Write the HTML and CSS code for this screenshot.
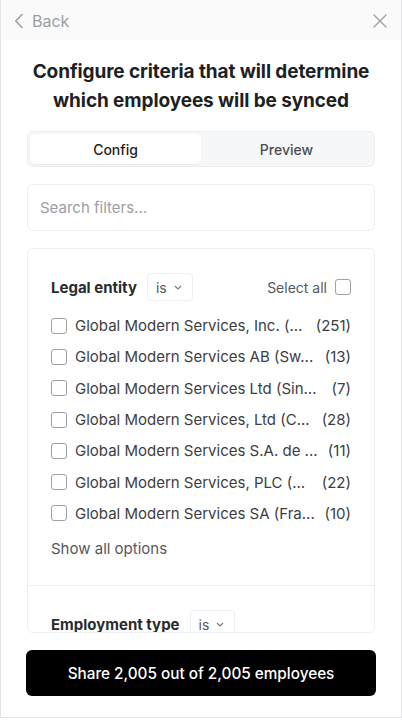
FILE: index.html
```html
<!DOCTYPE html>
<html>
<head>
<meta charset="utf-8">
<link rel="stylesheet" href="styles.css">
</head>
<body>
<div class="frame">
  <header class="topbar">
    <div class="back">
      <svg width="10" height="16" viewBox="0 0 10 16"><path d="M8 1.5 L1.8 8 L8 14.5" fill="none" stroke="#9a9da3" stroke-width="1.6" stroke-linecap="round" stroke-linejoin="round"/></svg>
      <span>Back</span>
    </div>
    <svg class="close" width="16" height="16" viewBox="0 0 16 16"><path d="M2 2 L14 14 M14 2 L2 14" fill="none" stroke="#a3a6ab" stroke-width="1.5" stroke-linecap="round"/></svg>
  </header>
  <h1 class="title">Configure criteria that will determine which employees will be synced</h1>
  <div class="tabs">
    <div class="tab active">Config</div>
    <div class="tab">Preview</div>
  </div>
  <div class="search">Search filters...</div>
  <div class="scroller">
    <section class="filter">
      <div class="filter-head">
        <span class="filter-name">Legal entity</span>
        <span class="op">is <svg width="8" height="5" viewBox="0 0 8 5"><path d="M1 1 L4 4 L7 1" fill="none" stroke="#777" stroke-width="1.1"/></svg></span>
        <span class="select-all">Select all <span class="box"></span></span>
      </div>
      <ul class="options">
        <li><span class="box"></span><span class="label">Global Modern Services, Inc. (...</span><span class="count">(251)</span></li>
        <li><span class="box"></span><span class="label">Global Modern Services AB (Sw...</span><span class="count">(13)</span></li>
        <li><span class="box"></span><span class="label">Global Modern Services Ltd (Sin...</span><span class="count">(7)</span></li>
        <li><span class="box"></span><span class="label">Global Modern Services, Ltd (C...</span><span class="count">(28)</span></li>
        <li><span class="box"></span><span class="label">Global Modern Services S.A. de ...</span><span class="count">(11)</span></li>
        <li><span class="box"></span><span class="label">Global Modern Services, PLC (...</span><span class="count">(22)</span></li>
        <li><span class="box"></span><span class="label">Global Modern Services SA (Fra...</span><span class="count">(10)</span></li>
      </ul>
      <div class="show-all">Show all options</div>
    </section>
    <section class="filter">
      <div class="filter-head">
        <span class="filter-name">Employment type</span>
        <span class="op">is <svg width="8" height="5" viewBox="0 0 8 5"><path d="M1 1 L4 4 L7 1" fill="none" stroke="#777" stroke-width="1.1"/></svg></span>
      </div>
    </section>
  </div>
  <button class="share">Share 2,005 out of 2,005 employees</button>
</div>
</body>
</html>
```
FILE: styles.css
```css
* { box-sizing: border-box; }
html, body { margin: 0; padding: 0; background: #fff; }
body { font-family: Inter, "Noto Sans", sans-serif; color: #222; }
.frame {
  width: 402px;
  height: 718px;
  border: 1px solid #e4e4e6;
  border-top: none;
  display: flex;
  flex-direction: column;
  align-items: stretch;
  overflow: hidden;
}
.topbar {
  height: 40px;
  background: #fafafa;
  display: flex;
  align-items: center;
  justify-content: space-between;
  padding: 0 13px 0 13px;
  flex-shrink: 0;
}
.back { display: flex; align-items: center; gap: 8px; color: #9a9da3; font-size: 16px; margin-top: 1px; }
.close { margin-top: 1px; }
.title {
  margin: 17px 30px 0;
  font-size: 19px;
  line-height: 29px;
  font-weight: 650;
  text-align: center;
  color: #1e1f22;
  letter-spacing: -0.1px;
}
.tabs {
  margin: 16px 26px 0;
  height: 36px;
  background: #f6f7f9;
  border: 1px solid #eceef0;
  border-radius: 6px;
  display: flex;
  padding: 2px;
  flex-shrink: 0;
}
.tab {
  flex: 1;
  display: flex;
  align-items: center;
  justify-content: center;
  font-size: 14px;
  font-weight: 500;
  color: #4b4d52;
  border-radius: 5px;
}
.tab.active { background: #fff; color: #1e1f22; box-shadow: 0 1px 2px rgba(0,0,0,0.06); }
.search {
  margin: 17px 26px 0;
  height: 47px;
  border: 1px solid #eceef0;
  border-radius: 6px;
  padding: 0 12px;
  display: flex;
  align-items: center;
  font-size: 15px;
  color: #9b9ea4;
  flex-shrink: 0;
}
.scroller {
  margin: 17px 26px 0;
  height: 385px;
  border: 1px solid #eceef0;
  border-radius: 6px;
  overflow: hidden;
  flex-shrink: 0;
}
.filter { padding: 24px 23px 0 23px; }
.filter + .filter { border-top: 1px solid #eceef0; }
.filter:first-child { height: 336px; }
.filter-head { display: flex; align-items: center; height: 28px; }
.filter-name { font-size: 15px; font-weight: 650; color: #2a2b2e; }
.op {
  margin-left: 10px;
  height: 28px;
  padding: 0 10px 0 8px;
  border: 1px solid #eceef0;
  border-radius: 4px;
  display: flex;
  align-items: center;
  gap: 7px;
  font-size: 14px;
  color: #55585d;
}
.select-all {
  margin-left: auto;
  display: flex;
  align-items: center;
  gap: 8px;
  font-size: 14px;
  color: #55585d;
}
.box {
  width: 16px;
  height: 16px;
  border: 1px solid #9ea1a6;
  border-radius: 3px;
  background: #fff;
  flex-shrink: 0;
}
.options { list-style: none; margin: 9px 0 0; padding: 0; }
.options li {
  height: 31.3px;
  display: flex;
  align-items: center;
  font-size: 15px;
  color: #3c3e42;
}
.options .box { margin-right: 8px; }
.label { flex: 1; white-space: nowrap; overflow: hidden; }
.count { margin-left: 8px; color: #3c3e42; }
.show-all { margin-top: 10px; font-size: 15px; color: #55585d; }
.filter + .filter { padding-top: 24px; }
.share {
  margin: 17px 25px 0;
  height: 46px;
  background: #000;
  color: #fff;
  border: none;
  border-radius: 6px;
  font-family: Inter, "Noto Sans", sans-serif;
  font-size: 15.3px;
  font-weight: 500;
  flex-shrink: 0;
}
```
